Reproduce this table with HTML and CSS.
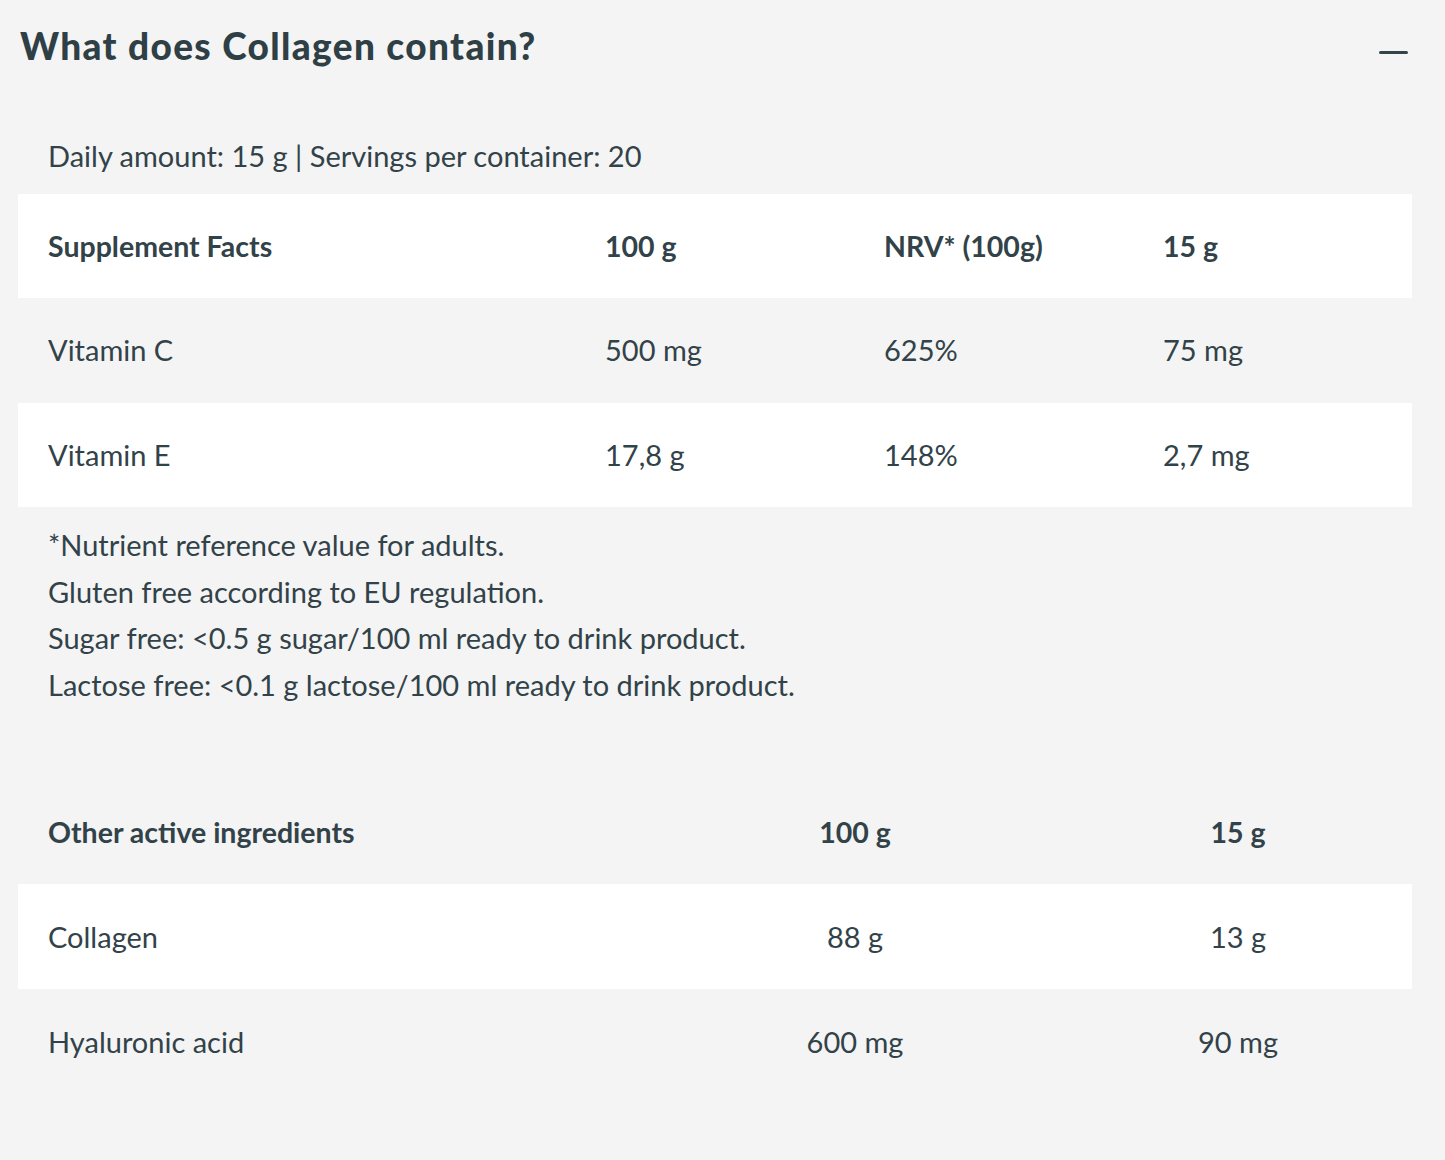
FILE: index.html
```html
<!DOCTYPE html>
<html lang="en">
<head>
<meta charset="utf-8">
<title>What does Collagen contain?</title>
<link rel="stylesheet" href="styles.css">
</head>
<body>
<section class="accordion">
  <header class="acc-head">
    <h2 class="acc-title">What does Collagen contain?</h2>
    <span class="acc-toggle" aria-hidden="true"></span>
  </header>
  <div class="acc-body">
    <p class="daily">Daily amount: 15 g | Servings per container: 20</p>
    <div class="facts">
      <div class="row row-white head">
        <div class="cell">Supplement Facts</div>
        <div class="cell">100 g</div>
        <div class="cell">NRV* (100g)</div>
        <div class="cell">15 g</div>
      </div>
      <div class="row">
        <div class="cell">Vitamin C</div>
        <div class="cell">500 mg</div>
        <div class="cell">625%</div>
        <div class="cell">75 mg</div>
      </div>
      <div class="row row-white">
        <div class="cell">Vitamin E</div>
        <div class="cell">17,8 g</div>
        <div class="cell">148%</div>
        <div class="cell">2,7 mg</div>
      </div>
    </div>
    <div class="notes">
      <p>*Nutrient reference value for adults.</p>
      <p>Gluten free according to EU regulation.</p>
      <p>Sugar free: &lt;0.5 g sugar/100 ml ready to drink product.</p>
      <p>Lactose free: &lt;0.1 g lactose/100 ml ready to drink product.</p>
    </div>
    <div class="active">
      <div class="row head">
        <div class="cell">Other active ingredients</div>
        <div class="cell c">100 g</div>
        <div class="cell c">15 g</div>
      </div>
      <div class="row row-white">
        <div class="cell">Collagen</div>
        <div class="cell c">88 g</div>
        <div class="cell c">13 g</div>
      </div>
      <div class="row">
        <div class="cell">Hyaluronic acid</div>
        <div class="cell c">600 mg</div>
        <div class="cell c">90 mg</div>
      </div>
    </div>
  </div>
</section>
</body>
</html>
```

FILE: styles.css
```css
html, body {
  margin: 0;
  padding: 0;
  background: #f4f4f4;
}
body {
  font-family: Lato, "Liberation Sans", sans-serif;
  color: #324249;
  width: 1445px;
  height: 1160px;
  overflow: hidden;
}
.accordion {
  padding: 0 33px 0 18px;
}
.acc-head {
  display: flex;
  align-items: center;
  justify-content: space-between;
  height: 96px;
}
.acc-title {
  margin: 0 0 5px;
  padding-left: 2px;
  font-family: Lato, sans-serif;
  font-weight: 900;
  font-size: 37px;
  letter-spacing: 1.35px;
  color: #2f3f46;
}
.acc-toggle {
  display: block;
  width: 29px;
  height: 3px;
  border-radius: 2px;
  background: #33444b;
  margin-right: 4px;
  margin-top: 8px;
}
.daily {
  margin: 0;
  padding: 44px 0 0 30px;
  height: 54px;
  font-size: 29px;
  line-height: 32px;
}
.facts .row {
  display: grid;
  grid-template-columns: 557px 279px 279px 279px;
  height: 104px;
  align-items: center;
}
.facts .row + .row { height: 104.5px; }
.row-white {
  background: #ffffff;
}
.cell {
  padding-left: 30px;
  font-size: 29px;
  line-height: 34px;
}
.head .cell {
  font-weight: 700;
  font-size: 28.5px;
}
.notes {
  padding: 15px 0 0 30px;
  height: 273px;
  box-sizing: border-box;
}
.notes p {
  margin: 0;
  font-size: 29px;
  line-height: 46.7px;
}
.active .row {
  display: grid;
  grid-template-columns: 628px 418px 348px;
  height: 105px;
  align-items: center;
}
.active .row.head { height: 104px; }
.cell.c {
  padding-left: 0;
  text-align: center;
}
```
